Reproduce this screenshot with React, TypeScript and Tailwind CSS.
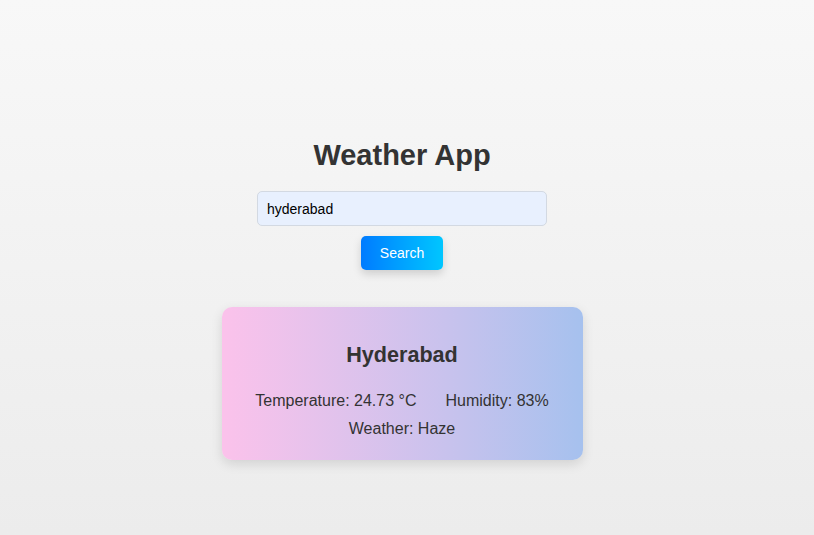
import { useState } from "react";

interface WeatherData {
  name: string;
  temp: number;
  humidity: number;
  description: string;
}

const data: WeatherData = {
  name: "Hyderabad",
  temp: 24.73,
  humidity: 83,
  description: "Haze",
};

export default function App() {
  const [city, setCity] = useState("hyderabad");

  return (
    <div className="min-h-[535px] w-full bg-gradient-to-b from-[#f8f8f8] to-[#ececec] font-['Liberation_Sans',Arial,sans-serif] text-[#333]">
      <div className="flex flex-col items-center pt-[138px] pr-[10px]">
        <h1 className="text-[29px] leading-[34px] font-bold text-[#333]">Weather App</h1>
        <input
          type="text"
          value={city}
          onChange={(e) => setCity(e.target.value)}
          className="mt-[19px] h-[35px] w-[290px] rounded-[5px] border border-[#d3d9e2] bg-[#e8f0fe] px-[9px] text-[14px] text-black outline-none"
        />
        <button
          type="button"
          className="mt-[10px] h-[34px] w-[82px] rounded-[5px] bg-gradient-to-r from-[#007bff] to-[#00c6ff] text-[14px] text-white shadow-[0_4px_8px_rgba(0,0,0,0.15)]"
        >
          Search
        </button>

        <div className="mt-[37px] flex h-[153px] w-[361px] flex-col items-center rounded-[10px] bg-gradient-to-r from-[#fbc2eb] to-[#a6c1ee] pt-[36px] shadow-[0_4px_12px_rgba(0,0,0,0.12)]">
          <h2 className="text-[21.6px] leading-[24px] font-bold">{data.name}</h2>
          <div className="mt-[20px] flex gap-[29px] text-[16px] leading-[28px]">
            <span>Temperature: {data.temp} °C</span>
            <span>Humidity: {data.humidity}%</span>
          </div>
          <p className="text-[16px] leading-[28px]">Weather: {data.description}</p>
        </div>
      </div>
    </div>
  );
}
